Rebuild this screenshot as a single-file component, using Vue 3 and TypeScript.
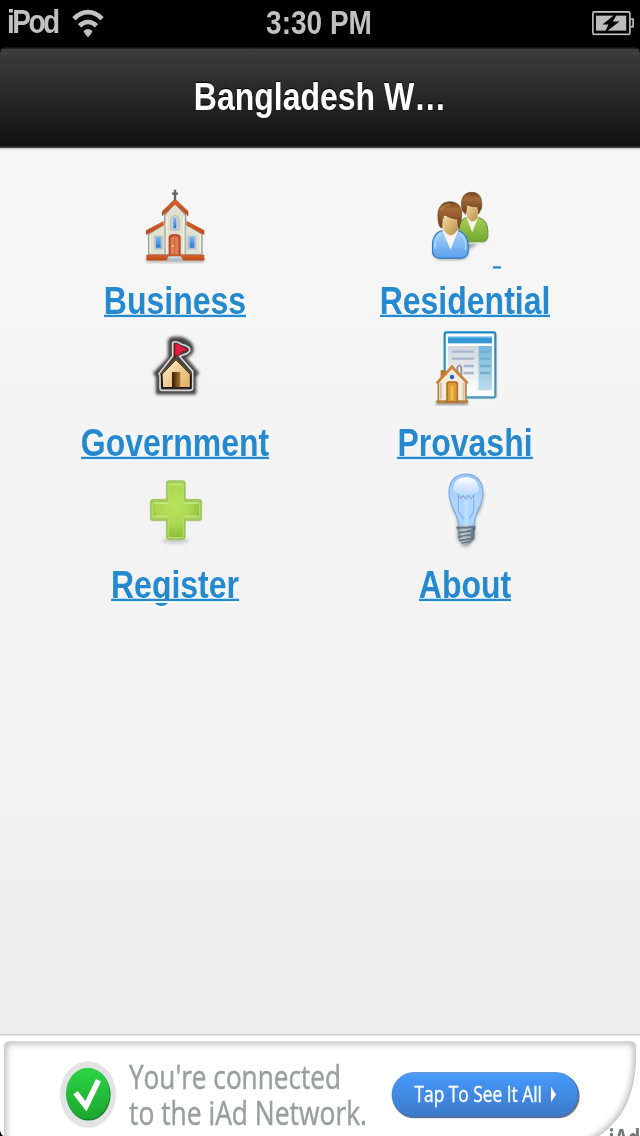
<script setup lang="ts">
interface Entry {
  id: string
  label: string
  box: string
}

const entries: Entry[] = [
  { id: 'business', label: 'Business', box: '39 26 192 227' },
  { id: 'residential', label: 'Residential', box: '27.5 26 192 227' },
  { id: 'government', label: 'Government', box: '39 17 192 227' },
  { id: 'provashi', label: 'Provashi', box: '39 18 192 227' },
  { id: 'register', label: 'Register', box: '39 9 192 227' },
  { id: 'about', label: 'About', box: '39 25 192 227' },
]
</script>

<template>
  <div class="screen">
    <div class="canvas">
      <div class="status">
        <div class="carrier">
          <span class="device">iPod</span>
          <svg class="wifi" viewBox="72 8 32 30" preserveAspectRatio="none">
            <g fill="none" stroke="#c1c1c1" stroke-width="4.6">
              <path d="M74 18.6C82 9.6 94 9.6 102 18.6" />
              <path d="M79.6 25.6C84.5 20.4 91.5 20.4 96.4 25.6" />
            </g>
            <path d="M83.6 30.6Q88 26.6 92.4 30.6Q92 33 88 36.8Q84 33 83.6 30.6Z" fill="#c1c1c1" />
          </svg>
        </div>
        <span class="clock">3:30 PM</span>
        <svg class="battery" viewBox="592 10 42 25" preserveAspectRatio="none">
          <rect x="592.9" y="11.2" width="37" height="22.6" rx="1.5" fill="none" stroke="#c4c4c4" stroke-width="1.6" />
          <path d="M630.5 18.4h2.6v7.6h-2.6" fill="none" stroke="#c4c4c4" stroke-width="1.6" />
          <rect x="596" y="15" width="30.2" height="15" fill="#bdbdbd" />
          <path d="M616.5 12.5L602.5 23.8H608.5L604.5 32.5L619.5 20.8H612.8L617.5 12.5Z" fill="#000" />
        </svg>
      </div>

      <header class="bar"><h1>Bangladesh W…</h1></header>

      <main class="grid">
        <a v-for="e in entries" :key="e.id" class="entry">
          <span class="picture">
            <svg class="icon" :viewBox="e.box" preserveAspectRatio="none">
              <defs v-if="e.id === 'business'">
                <filter id="soft" x="-30%" y="-30%" width="160%" height="160%"><feGaussianBlur stdDeviation="4" /></filter>
                <filter id="halo" x="-30%" y="-30%" width="160%" height="160%"><feGaussianBlur stdDeviation="4" /></filter>
                <linearGradient id="roof" x1="0" y1="0" x2="0" y2="1"><stop stop-color="#d9622c" /><stop offset="1" stop-color="#b9481a" /></linearGradient>
                <linearGradient id="pane" x1="0" y1="0" x2="0" y2="1"><stop stop-color="#79b9f3" /><stop offset="1" stop-color="#2477d3" /></linearGradient>
                <linearGradient id="hair" x1="0" y1="0" x2="0" y2="1"><stop stop-color="#70431c" /><stop offset=".25" stop-color="#a66c38" /><stop offset="1" stop-color="#6d3b16" /></linearGradient>
                <linearGradient id="skin" x1="0" y1="0" x2="1" y2="1"><stop stop-color="#f3dba0" /><stop offset="1" stop-color="#b98d45" /></linearGradient>
                <linearGradient id="blue" x1="0" y1="0" x2="0" y2="1"><stop stop-color="#a5d0fb" /><stop offset="1" stop-color="#5da2ee" /></linearGradient>
                <linearGradient id="green" x1="0" y1="0" x2="0" y2="1"><stop stop-color="#a6cf5a" /><stop offset="1" stop-color="#72a72a" /></linearGradient>
                <linearGradient id="sand" x1="0" y1="0" x2="1" y2="1"><stop stop-color="#fff0cb" /><stop offset="1" stop-color="#dfac62" /></linearGradient>
                <linearGradient id="doorway"><stop stop-color="#3a1800" /><stop offset="1" stop-color="#a97836" /></linearGradient>
                <linearGradient id="page" x1="0" y1="0" x2="0" y2="1"><stop stop-color="#d2d5dc" /><stop offset="1" stop-color="#fff" /></linearGradient>
                <linearGradient id="side" x1="0" y1="0" x2="0" y2="1"><stop stop-color="#72b8da" /><stop offset="1" stop-color="#bedcef" /></linearGradient>
                <linearGradient id="frame" x1="0" y1="0" x2="0" y2="1"><stop stop-color="#178bc4" /><stop offset="1" stop-color="#4197bd" /></linearGradient>
                <radialGradient id="plus" cx=".45" cy=".4" r=".6"><stop stop-color="#bce35e" /><stop offset=".6" stop-color="#abd751" /><stop offset="1" stop-color="#90bf38" /></radialGradient>
                <linearGradient id="glass" x1="0" y1="0" x2="0" y2="1"><stop stop-color="#93c5fb" /><stop offset=".5" stop-color="#b1d6ff" /><stop offset="1" stop-color="#a5d4ff" /></linearGradient>
                <linearGradient id="shine" x1="0" y1="0" x2="0" y2="1"><stop stop-color="#fff" /><stop offset="1" stop-color="#fff" stop-opacity=".2" /></linearGradient>
                <linearGradient id="metal"><stop stop-color="#748696" /><stop offset=".4" stop-color="#b1bcc5" /><stop offset="1" stop-color="#536474" /></linearGradient>
              </defs>

              <g v-if="e.id === 'business'">
                <rect x="49" y="232" width="174" height="13" rx="5" fill="#777" opacity=".5" filter="url(#soft)" />
                <path d="M56 160L104 130V104L135 66L167 104V130L216 160V222H56Z" fill="#e0e2cf" stroke="#989b9d" stroke-width="4" />
                <path d="M105 134V220M166 134V220" stroke="#afb3b0" stroke-width="5" />
                <path d="M61 163V218M211 163V218M110 108V218M161 108V218" stroke="#f0f1e7" stroke-width="4" />
                <path d="M48 163V149L101 121V134ZM223 163V149L169 120V134Z" fill="url(#roof)" />
                <path d="M97 105V92L135 55L174 92V105L135 71Z" fill="url(#roof)" stroke="#a6532c" stroke-width="2" />
                <path d="M135 27V59M126 39H144" stroke="#61666b" stroke-width="7" />
                <path d="M122 148V118Q122 105 135 105Q147 105 147 118V148Z" fill="#ccd5d8" stroke="#a0a9aa" stroke-width="2" />
                <rect x="130" y="111" width="9" height="32" fill="url(#pane)" />
                <path d="M72 207V165H99V207ZM172 207V165H199V207Z" fill="#b9c5cc" />
                <rect x="78" y="168" width="14" height="33" fill="url(#pane)" /><rect x="179" y="168" width="14" height="33" fill="url(#pane)" />
                <path d="M49 222H223V239H49Z" fill="url(#roof)" />
                <path d="M116 224V170Q117 160 134 160Q151 160 152 170V224Z" fill="#b34927" />
                <path d="M122 222V174Q123 166 134 166Q145 166 146 174V222Z" fill="#e17f59" stroke="#d0602f" stroke-width="3" />
                <path d="M134 170V222" stroke="#c14f2e" stroke-width="2" /><circle cx="128" cy="196" r="3" fill="#fae5a0" />
                <path d="M116 226H153L161 242H108Z" fill="#b5bbc0" /><path d="M115 231H154" stroke="#d8dcdf" stroke-width="3" />
              </g>

              <g v-else-if="e.id === 'residential'">
                <path d="M40 213Q42 237 62 237H124Q147 235 147 206L204 170Q200 188 178 188H141Z" fill="#555" opacity=".55" filter="url(#soft)" />
                <path d="M119 167V135Q124 114 139 111H178Q203 119 204 150V168Q202 182 184 183H133Z" fill="url(#green)" stroke="#66982d" stroke-width="3" />
                <path d="M140 110H175L157 155Z" fill="#f8f9ed" />
                <path d="M139 72H174V108Q159 137 141 108Z" fill="url(#skin)" />
                <path d="M128 91C119 59 129 36 154 35C180 34 189 55 185 83L176 100L174 78Q158 80 141 73L138 101Z" fill="url(#hair)" stroke="#67401f" stroke-width="2" />
                <path d="M38 185Q42 159 62 151H119Q142 162 145 190V212Q142 231 124 232H60Q39 231 38 212Z" fill="url(#blue)" stroke="#2f79cb" stroke-width="3.5" />
                <path d="M46 205V189Q49 170 64 161M137 206V189Q134 170 121 160" fill="none" stroke="#b0d5fd" stroke-width="4" />
                <path d="M68 151H115L92 206Z" fill="#f6f4ed" />
                <path d="M66 108H113V148Q92 180 72 148Z" fill="url(#skin)" />
                <path d="M57 130C49 92 57 64 91 63C120 64 130 84 124 119L115 146L113 116Q94 113 73 103L67 118V143Q58 139 57 130Z" fill="url(#hair)" stroke="#6c4019" stroke-width="2" />
                <path d="M63 87Q71 73 91 71" fill="none" stroke="#bd8752" stroke-width="5" opacity=".6" />
              </g>

              <g v-else-if="e.id === 'government'">
                <path d="M116 96V48Q117 36 132 36H155Q188 47 189 70Q188 88 165 95L205 142L196 151V204H80V154L72 143Z" fill="#444" stroke="#444" stroke-width="5" stroke-linejoin="round" filter="url(#halo)" />
                <path d="M128 91V51Q137 44 153 55Q184 63 179 76Q172 86 148 91L188 137V189Q187 194 180 194H95Q90 193 90 188V149L87 144Z" fill="#444" stroke="#d8d8d8" stroke-width="5" stroke-linejoin="round" />
                <path d="M95 145L138 100L182 145V186H97Z" fill="url(#sand)" stroke="#171512" stroke-width="5" />
                <path d="M92 146L138 99L184 146" fill="none" stroke="#61482b" stroke-width="5" />
                <rect x="126" y="139" width="25" height="46" fill="url(#doorway)" />
                <path d="M134 98V53" stroke="#75111e" stroke-width="4" />
                <path d="M135 53Q144 53 153 61L175 73L153 79L149 89H135Z" fill="#e41b40" stroke="#8e142a" stroke-width="2" />
              </g>

              <g v-else-if="e.id === 'provashi'">
                <path d="M76 30H228V217H76Z" fill="#777" opacity=".6" filter="url(#soft)" />
                <rect x="74" y="21" width="152" height="195" rx="5" fill="#fff" stroke="url(#frame)" stroke-width="6.5" />
                <rect x="84" y="34" width="132" height="20" fill="#3397d8" /><path d="M84 36H216" stroke="#66b8e7" stroke-width="4" />
                <rect x="84" y="62" width="90" height="141" fill="url(#page)" /><rect x="175" y="62" width="41" height="133" fill="url(#side)" />
                <path d="M95 79H162M95 100H162M131 122H162M131 143H162" stroke="#a6b8d0" stroke-width="7" />
                <path d="M180 79H211M180 100H211M180 122H211M180 143H211" stroke="#77adc9" stroke-width="7" />
                <path d="M112 142V126Q118 115 124 126V149" fill="none" stroke="#979b9e" stroke-width="6" />
                <rect x="49" y="229" width="94" height="9" fill="#666" opacity=".8" filter="url(#soft)" />
                <path d="M62 135H76V153L62 161Z" fill="#b97027" />
                <path d="M55 169L96 126L138 170V230H55Z" fill="#f2eadb" stroke="#af8044" stroke-width="5" />
                <path d="M63 172V222M131 172V222" stroke="#d5c2a6" stroke-width="6" />
                <path d="M50 174L96 124L143 174" fill="none" stroke="#c98332" stroke-width="8" />
                <path d="M49 229H144" stroke="#b58043" stroke-width="9" />
                <path d="M81 229V175Q81 170 87 170H106Q112 170 112 176V229Z" fill="#d99b35" stroke="#b46f24" stroke-width="5" />
                <path d="M91 182H101V225H91Z" fill="#edba50" /><circle cx="96" cy="155" r="6.5" fill="#1861c6" />
              </g>

              <g v-else-if="e.id === 'register'">
                <ellipse cx="137" cy="211" rx="40" ry="9" fill="#777" opacity=".3" filter="url(#soft)" />
                <path d="M109 38Q109 31 116 31H159Q166 31 166 38V87H208Q215 87 215 95V143Q215 151 207 151H166V199Q165 208 157 208H117Q109 208 109 199V151H69Q61 151 61 143V95Q61 87 69 87H109Z" fill="#9fca57" stroke="#9ac052" stroke-width="2" />
                <path d="M115 42Q115 38 119 38H156Q160 38 160 42V96H205Q209 96 209 101V137Q209 143 204 143H160V195Q160 201 155 201H120Q115 201 115 195V143H72Q67 143 67 138V101Q67 96 72 96H115Z" fill="url(#plus)" stroke="#b9de72" stroke-width="3" />
                <path d="M118 43H157M71 99H113M164 99H205M71 138H112M165 138H205" stroke="#ddf3a0" stroke-width="4" opacity=".6" />
              </g>

              <g v-else>
                <path d="M88 88Q101 31 140 32Q180 35 192 90Q188 138 166 157V221L145 245H126L111 220V161Q91 128 88 88Z" fill="#666" opacity=".45" filter="url(#soft)" />
                <path d="M87 82C87 45 108 27 138 27C168 27 189 48 189 83C189 125 164 138 162 184H117C117 151 87 124 87 82Z" fill="url(#glass)" stroke="#85a8d3" stroke-width="3.5" />
                <path d="M101 78Q98 37 138 37Q177 37 176 79Q138 104 101 78Z" fill="url(#shine)" />
                <path d="M130 161L115 139V90L122 101L129 91L137 101L145 91L153 101L161 90V136L149 162" fill="none" stroke="#8babd5" stroke-width="3" />
                <path d="M139 108V183" stroke="#cae8ff" stroke-width="12" opacity=".5" />
                <path d="M109 187Q109 182 116 182H161Q168 182 167 188L164 197L163 222Q150 238 138 240Q119 230 113 217L114 199Z" fill="url(#metal)" />
                <path d="M110 188H165M115 203L162 196M115 215L163 207M117 227L161 218M125 234L151 229" stroke="#647585" stroke-width="4" />
                <path d="M119 196L154 191M121 209L153 204M123 221L151 215" stroke="#bfc9d0" stroke-width="3" />
              </g>
            </svg>
            <span v-if="e.id === 'residential'" class="gap">&nbsp;</span>
          </span>
          <span class="label">{{ e.label }}</span>
        </a>
      </main>

      <svg class="ad" viewBox="0 1034 640 102" preserveAspectRatio="none">
        <defs>
          <linearGradient id="adButton" x1="0" y1="0" x2="0" y2="1"><stop stop-color="#4fa0fb" /><stop offset=".15" stop-color="#4595f5" /><stop offset="1" stop-color="#3c79c9" /></linearGradient>
          <linearGradient id="adCheck" x1="0" y1="0" x2="0" y2="1"><stop stop-color="#2ed446" /><stop offset="1" stop-color="#1ba72d" /></linearGradient>
          <filter id="adBlur" x="-10%" y="-10%" width="120%" height="120%"><feGaussianBlur stdDeviation="3.2" /></filter>
          <clipPath id="adPanel"><path d="M4 1150V1047Q4 1041 10 1041H630Q636 1041 636 1047V1060C634 1100 620 1124 592 1140V1150Z" /></clipPath>
        </defs>
        <rect x="0" y="1034" width="640" height="102" fill="#fff" />
        <rect x="0" y="1034" width="640" height="2" fill="#e6e6e6" />
        <g clip-path="url(#adPanel)">
          <path d="M4 1150V1047Q4 1041 10 1041H630Q636 1041 636 1047V1060C634 1100 620 1124 592 1140V1150Z" fill="none" stroke="#b4b4b4" stroke-width="5" filter="url(#adBlur)" />
          <path d="M4 1150V1047Q4 1041 10 1041H630Q636 1041 636 1047V1060C634 1100 620 1124 592 1140" fill="none" stroke="#cacaca" stroke-width="2" />
        </g>
        <ellipse cx="88" cy="1094.3" rx="28" ry="33.3" fill="#e3e3e5" />
        <ellipse cx="88.6" cy="1094.4" rx="22" ry="26" fill="#1b8430" />
        <ellipse cx="87.8" cy="1093.2" rx="21.8" ry="25.7" fill="url(#adCheck)" />
        <path d="M75.5 1092.5L86 1106L98.5 1080" fill="none" stroke="#fff" stroke-width="5.6" />
        <g class="message">
          <text x="129" y="1088.5" textLength="212" lengthAdjust="spacingAndGlyphs">You're connected</text>
          <text x="129" y="1124.3" textLength="238" lengthAdjust="spacingAndGlyphs">to the iAd Network.</text>
        </g>
        <rect x="392.6" y="1073.6" width="187" height="44.5" rx="22" fill="#68758a" />
        <rect x="392" y="1072.3" width="186" height="44.3" rx="22" fill="url(#adButton)" stroke="#376fae" stroke-width=".6" />
        <text class="action" x="414.5" y="1102" textLength="127.5" lengthAdjust="spacingAndGlyphs">Tap To See It All</text>
        <path d="M551 1086.5L556 1094.3L551 1102Z" fill="#fff" />
        <text class="brand" x="608.5" y="1147" textLength="32" lengthAdjust="spacingAndGlyphs">iAd</text>
        <path d="M0 1130Q1 1135 4 1136H0Z" fill="#000" />
      </svg>
    </div>
  </div>
</template>

<style>
body {
  margin: 0;
  background: #000;
}
</style>

<style scoped>
.screen {
  width: 640px;
  height: 1136px;
  overflow: hidden;
  background: #000;
}
.canvas {
  display: flex;
  flex-direction: column;
  width: 640px;
  height: 960px;
  transform: scaleY(1.18333);
  transform-origin: 0 0;
  font-family: "Liberation Sans", Arial, sans-serif;
}
.status {
  display: grid;
  grid-template-columns: 1fr auto 1fr;
  height: 40px;
  box-sizing: border-box;
  padding: 0 6px 0 7px;
  color: #c1c1c1;
  font-size: 28px;
  font-weight: 700;
  line-height: 40px;
}
.carrier {
  display: flex;
  gap: 15px;
}
.device {
  width: 50px;
  letter-spacing: -2.5px;
  line-height: 38px;
  white-space: nowrap;
}
.wifi {
  width: 32px;
  height: 25.4px;
  margin-top: 6.8px;
}
.clock {
  padding-right: 3px;
}
.battery {
  justify-self: end;
  width: 42px;
  height: 21.1px;
  margin-top: 8.5px;
}
.bar {
  height: 85px;
  box-sizing: border-box;
  border-top: 1px solid #292929;
  border-bottom: 2px solid #303030;
  border-radius: 5px 5px 0 0;
  background: linear-gradient(#3d3d3d, #111);
  text-align: center;
}
h1 {
  margin: 0;
  color: #fff;
  font-size: 32px;
  line-height: 82px;
  text-shadow: 0 -1px 1px #000;
}
.grid {
  display: grid;
  flex: 1;
  grid-template-columns: 290px 290px;
  grid-auto-rows: 120px;
  align-content: start;
  justify-content: center;
  padding-top: 34.4px;
  border-top: 1px solid #d6d6d6;
  box-sizing: border-box;
  background: linear-gradient(#f7f7f7, #eee);
}
.entry {
  display: flex;
  flex-direction: column;
  align-items: center;
  color: #2489ce;
}
.picture {
  display: flex;
  height: 64px;
}
.icon {
  width: 64px;
  height: 64px;
  overflow: visible;
}
.gap,
.label {
  position: relative;
  font-size: 32px;
  font-weight: 700;
  text-shadow: 0 2px 0 #fff;
}
.gap {
  height: 64px;
  line-height: 64px;
}
.label {
  margin-top: 3px;
  line-height: 54px;
}
.gap::after,
.label::after {
  position: absolute;
  right: 0;
  left: 0;
  height: 2px;
  background: #2489ce;
  box-shadow: 0 1.5px 0 #fff;
  content: "";
}
.label::after {
  top: 38.3px;
}
.gap::after {
  top: 64.5px;
}
.ad {
  display: block;
  flex: none;
  width: 640px;
  height: 86.2px;
  font-family: "Open Sans", "Noto Sans", sans-serif;
}
.message {
  fill: #9b9da1;
  stroke: #9b9da1;
  stroke-width: 0.5px;
  font-size: 33.5px;
}
.action {
  fill: #fff;
  stroke: #fff;
  stroke-width: 0.4px;
  font-size: 22.5px;
}
.brand {
  fill: #77787a;
  font-size: 25px;
  font-weight: 700;
}
</style>
